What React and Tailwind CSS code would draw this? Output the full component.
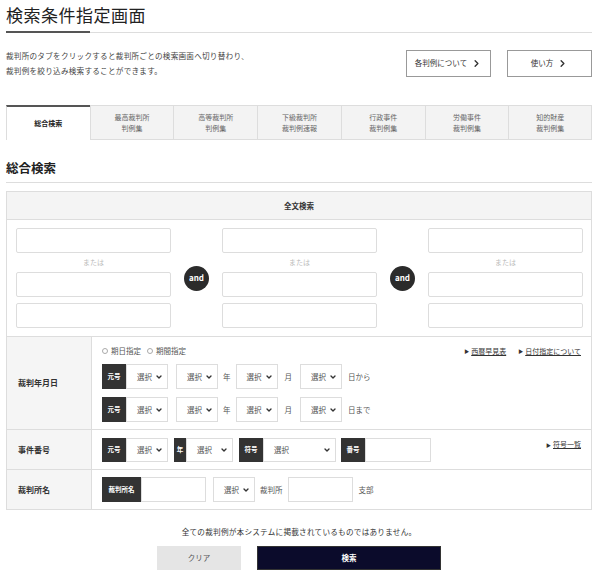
import React from "react";
import { ChevronDown, ChevronRight } from "lucide-react";

const tabs = [
    ["総合検索"],
    ["最高裁判所", "判例集"],
    ["高等裁判所", "判例集"],
    ["下級裁判所", "裁判例速報"],
    ["行政事件", "裁判例集"],
    ["労働事件", "裁判例集"],
    ["知的財産", "裁判例集"],
];

const Select = ({ w, label }) => (
    <div className={`flex h-full items-center justify-between border border-[#ddd] bg-white pl-[10px] pr-[4px] text-[7.5px] text-[#555] ${w}`}>
        <span>{label || "選択"}</span>
        <ChevronDown size={8} strokeWidth={4} className="text-[#333]" />
    </div>
);

const Tag = ({ children, w }) => (
    <div className={`flex h-full items-center justify-center bg-[#333] text-[6.5px] font-bold text-white ${w}`}>
        {children}
    </div>
);

const Input = ({ w }) => <div className={`h-full border border-[#ddd] bg-white ${w}`}></div>;

const TextCol = () => (
    <div className="flex w-[155px] flex-col">
        <div className="h-[25px] rounded-[2px] border border-[#ddd]"></div>
        <div className="flex h-[19px] items-center justify-center text-[7px] text-[#bbb]">または</div>
        <div className="h-[25px] rounded-[2px] border border-[#ddd]"></div>
        <div className="mt-[6px] h-[25px] rounded-[2px] border border-[#ddd]"></div>
    </div>
);

const And = () => (
    <div className="flex h-[25px] w-[25px] items-center justify-center rounded-full bg-[#2b2b2b] text-[8px] font-bold text-white">
        and
    </div>
);

const Link = ({ children }) => (
    <span className="flex items-center text-[7px] text-[#333]">
        <span className="mr-[2px] text-[5px]">▶</span>
        <span className="underline">{children}</span>
    </span>
);

const Radio = ({ children }) => (
    <span className="flex items-center gap-[3px]">
        <span className="h-[6px] w-[6px] rounded-full border border-[#aaa]"></span>
        {children}
    </span>
);

const DateRow = ({ end }) => (
    <div className="flex h-[25px] items-center text-[7.5px] text-[#555]">
        <Tag w="w-[24px]">元号</Tag>
        <Select w="w-[42px]" />
        <div className="ml-[8px] h-full">
            <Select w="w-[42px]" />
        </div>
        <span className="mx-[5px]">年</span>
        <Select w="w-[42px]" />
        <span className="ml-[7px] mr-[8px]">月</span>
        <Select w="w-[42px]" />
        <span className="ml-[6px]">{end}</span>
    </div>
);

export default function App() {
    return (
        <div className="w-[600px] bg-white pb-[5px] pl-[6px] pr-[8px] font-['Noto_Sans_CJK_JP',sans-serif] text-[#333]">
            <h1 className="pt-[4px] text-[17px] leading-[22px] tracking-[0.5px] text-[#222]">検索条件指定画面</h1>
            <div className="mt-[5px] flex items-center">
                <div className="h-[2px] w-[84px] bg-[#555]"></div>
                <div className="h-px flex-1 bg-[#ddd]"></div>
            </div>

            <div className="mt-[15px] flex items-center justify-between">
                <p className="text-[7.6px] leading-[15px] tracking-[0.25px] text-[#444]">
                    裁判所のタブをクリックすると裁判所ごとの検索画面へ切り替わり、
                    <br />
                    裁判例を絞り込み検索することができます。
                </p>
                <div className="flex gap-[16px]">
                    <a href="#" className="flex h-[27px] w-[85px] items-center justify-center gap-[4px] border border-[#999] text-[7.5px] text-[#333]">
                        各判例について
                        <ChevronRight size={11} strokeWidth={3} />
                    </a>
                    <a href="#" className="flex h-[27px] w-[85px] items-center justify-center gap-[4px] border border-[#999] text-[7.5px] text-[#333]">
                        使い方
                        <ChevronRight size={11} strokeWidth={3} />
                    </a>
                </div>
            </div>

            <div className="mt-[27px] grid h-[35px] grid-cols-7">
                {tabs.map((t, i) =>
                    i === 0 ? (
                        <div key={i} className="flex items-center justify-center border-l border-t-2 border-l-[#ddd] border-t-[#555] bg-white text-[7px] font-bold text-[#222]">
                            {t[0]}
                        </div>
                    ) : (
                        <div key={i} className="flex flex-col items-center justify-center border-b border-l border-t border-[#ddd] bg-[#f3f3f3] text-[7px] leading-[11px] text-[#666] last:border-r">
                            <span>{t[0]}</span>
                            <span>{t[1]}</span>
                        </div>
                    )
                )}
            </div>

            <h2 className="mt-[20px] border-b border-[#ddd] pb-[6px] text-[12.5px] font-bold leading-[16px] text-[#222]">総合検索</h2>

            <div className="mt-[8px] border border-[#ddd]">
                <div className="flex h-[28px] items-center justify-center border-b border-[#ddd] bg-[#f4f4f4] text-[7.5px] font-bold">
                    全文検索
                </div>
                <div className="flex items-center gap-[13px] pb-[8px] pl-[9px] pt-[8px]">
                    <TextCol />
                    <And />
                    <TextCol />
                    <And />
                    <TextCol />
                </div>

                <div className="grid grid-cols-[85px_1fr] border-t border-[#ddd]">
                    <div className="flex items-center border-r border-[#ddd] bg-[#f5f5f5] pl-[11px] text-[8px] font-bold">裁判年月日</div>
                    <div className="px-[10px] pb-[7px] pt-[7px]">
                        <div className="flex h-[14px] items-center justify-between">
                            <div className="flex gap-[6px] text-[7.5px] text-[#555]">
                                <Radio>期日指定</Radio>
                                <Radio>期間指定</Radio>
                            </div>
                            <div className="flex gap-[12px]">
                                <Link>西暦早見表</Link>
                                <Link>日付指定について</Link>
                            </div>
                        </div>
                        <div className="mt-[6px]">
                            <DateRow end="日から" />
                        </div>
                        <div className="mt-[8px]">
                            <DateRow end="日まで" />
                        </div>
                    </div>
                </div>

                <div className="grid grid-cols-[85px_1fr] border-t border-[#ddd]">
                    <div className="flex items-center border-r border-[#ddd] bg-[#f5f5f5] pl-[11px] text-[8px] font-bold">事件番号</div>
                    <div className="flex justify-between px-[10px] pb-[7px] pt-[8px]">
                        <div className="flex h-[24px] items-center">
                            <Tag w="w-[24px]">元号</Tag>
                            <Select w="w-[42px]" />
                            <div className="ml-[6px] flex h-full">
                                <Tag w="w-[12px]">年</Tag>
                                <Select w="w-[47px]" />
                            </div>
                            <div className="ml-[6px] flex h-full">
                                <Tag w="w-[24px]">符号</Tag>
                                <Select w="w-[73px]" />
                            </div>
                            <div className="ml-[5px] flex h-full">
                                <Tag w="w-[24px]">番号</Tag>
                                <Input w="w-[66px]" />
                            </div>
                        </div>
                        <div className="mt-[1px]">
                            <Link>符号一覧</Link>
                        </div>
                    </div>
                </div>

                <div className="grid grid-cols-[85px_1fr] border-t border-[#ddd]">
                    <div className="flex items-center border-r border-[#ddd] bg-[#f5f5f5] pl-[11px] text-[8px] font-bold">裁判所名</div>
                    <div className="px-[10px] pb-[7px] pt-[7px]">
                        <div className="flex h-[25px] items-center text-[7.5px] text-[#555]">
                            <Tag w="w-[39px]">裁判所名</Tag>
                            <Input w="w-[65px]" />
                            <div className="ml-[7px] h-full">
                                <Select w="w-[42px]" />
                            </div>
                            <span className="mx-[5px]">裁判所</span>
                            <Input w="w-[65px]" />
                            <span className="ml-[6px]">支部</span>
                        </div>
                    </div>
                </div>
            </div>

            <p className="mt-[15px] text-center text-[7.6px] leading-[14px] tracking-[0.25px] text-[#333]">
                全ての裁判例が本システムに掲載されているものではありません。
            </p>
            <div className="mt-[7px] flex justify-center gap-[16px]">
                <button className="h-[24px] w-[84px] bg-[#e5e5e5] text-[7.5px] text-[#555]">クリア</button>
                <button className="h-[24px] w-[184px] border border-[#333] bg-[#0b0b2b] text-[7.5px] font-bold text-white">検索</button>
            </div>
        </div>
    );
}
